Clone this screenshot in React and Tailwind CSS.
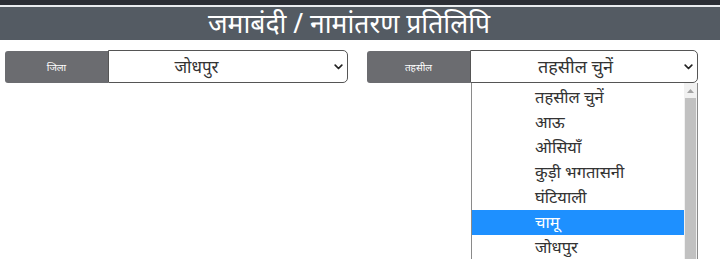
import React from "react";

const Chevron = () => (
  <svg width="9" height="6" viewBox="0 0 9 6" className="shrink-0">
    <path d="M1.2 1.2 L4.5 4.5 L7.8 1.2" fill="none" stroke="#222" strokeWidth="1.7" strokeLinecap="round" strokeLinejoin="round" />
  </svg>
);

const options = ["तहसील चुनें", "आऊ", "ओसियाँ", "कुड़ी भगतासनी", "घंटियाली", "चामू", "जोधपुर"];

export default function App() {
  return (
    <div className="w-[720px] h-[259px] bg-white overflow-hidden relative font-normal" style={{ fontFamily: '"Noto Sans", "Noto Sans Devanagari", sans-serif' }}>
      <div className="h-[5px] bg-[#2b2e35]" />
      <div className="h-[2px] bg-[#e9ecef]" />
      <div className="h-[33px] bg-[#545b63] flex items-center justify-center">
        <span className="text-white text-[26.5px] leading-none font-normal mr-[22px]">जमाबंदी / नामांतरण प्रतिलिपि</span>
      </div>
      <div className="flex pl-[5px] pt-[10px] gap-[19px]">
        <div className="flex h-[33px]">
          <div className="w-[103px] h-[32px] mt-[1px] bg-[#6b6c70] rounded-l-[3px] flex items-center justify-center text-white text-[10px]">जिला</div>
          <div className="w-[240px] h-[33px] border border-[#555] rounded-r-[5px] bg-white flex items-center pl-[6px] pr-[4px]">
            <span className="flex-1 text-center text-[17px] text-[#333] pr-[56px]">जोधपुर</span>
            <Chevron />
          </div>
        </div>
        <div className="flex h-[33px]">
          <div className="w-[103px] h-[32px] mt-[1px] bg-[#6b6c70] rounded-l-[3px] flex items-center justify-center text-white text-[10px]">तहसील</div>
          <div className="w-[228px] h-[33px] border border-[#555] rounded-r-[5px] bg-white flex items-center pl-[6px] pr-[4px]">
            <span className="flex-1 text-center text-[18px] text-[#333] pr-[10px]">तहसील चुनें</span>
            <Chevron />
          </div>
        </div>
      </div>
      <div className="absolute left-[471px] top-[83px] w-[227px] h-[180px] bg-white border-l border-r border-[#8a8a8a] flex">
        <div className="flex-1 pt-[2px]">
          {options.map((o, i) => (
            <div
              key={o}
              className={
                "h-[25px] flex items-center pl-[63px] text-[16.5px] " +
                (i === 5 ? "bg-[#1e90ff] text-white" : "text-[#333]")
              }
            >
              {o}
            </div>
          ))}
        </div>
        <div className="w-[13px] bg-[#f1f1f1] flex flex-col items-center">
          <div className="h-[15px] flex items-center justify-center">
            <svg width="7" height="4" viewBox="0 0 7 4">
              <path d="M0 4 L3.5 0 L7 4 Z" fill="#a3a3a3" />
            </svg>
          </div>
          <div className="w-[11px] flex-1 bg-[#c1c1c1]" />
        </div>
      </div>
    </div>
  );
}
